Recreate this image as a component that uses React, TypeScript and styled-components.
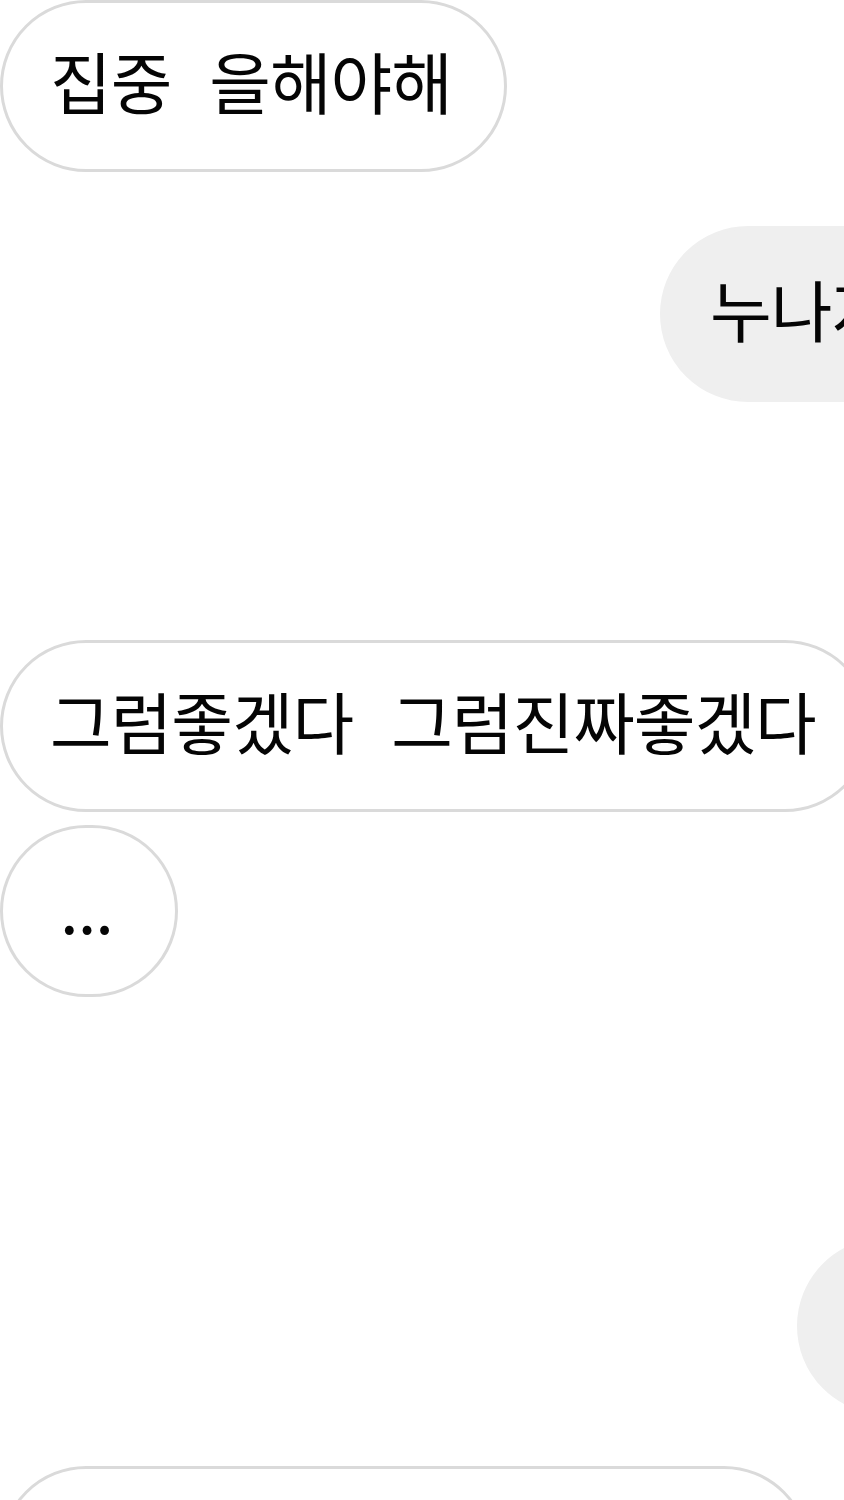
import styled, { createGlobalStyle } from 'styled-components'

const GlobalStyle = createGlobalStyle`
  html, body {
    margin: 0;
    padding: 0;
    background: #ffffff;
    overflow: hidden;
  }
  body {
    font-family: 'Noto Sans CJK KR', 'Noto Sans', sans-serif;
    color: #050505;
  }
`

type Side = 'left' | 'right'

interface Message {
  text: string
  side: Side
  gap: number
  indent?: number
}

const messages: Message[] = [
  { text: '집중\u00a0\u00a0을해야해', side: 'left', gap: 0 },
  { text: '누나지금뭐해', side: 'right', gap: 54, indent: 660 },
  { text: '그럼좋겠다\u00a0\u00a0그럼진짜좋겠다', side: 'left', gap: 238 },
  { text: '...', side: 'left', gap: 13 },
  { text: '응응', side: 'right', gap: 241, indent: 797 },
  { text: '나도\u00a0보고싶어\u00a0진짜그래요', side: 'left', gap: 52 },
]

const Thread = styled.div`
  display: flex;
  flex-direction: column;
  width: 844px;
  overflow: hidden;
`

const Row = styled.div<{ $gap: number; $indent: number }>`
  display: flex;
  justify-content: flex-start;
  margin-top: ${(p) => p.$gap}px;
  padding-left: ${(p) => p.$indent}px;
`

const Bubble = styled.div<{ $side: Side }>`
  box-sizing: border-box;
  flex-shrink: 0;
  display: flex;
  align-items: center;
  justify-content: center;
  min-width: 178px;
  height: ${(p) => (p.$side === 'right' ? 176 : 172)}px;
  padding: 0 52px 14px 47px;
  border-radius: 88px;
  border: 3px solid ${(p) => (p.$side === 'right' ? '#efefef' : '#dadada')};
  background: ${(p) => (p.$side === 'right' ? '#efefef' : '#ffffff')};
  font-size: 67px;
  line-height: 1;
  white-space: nowrap;
  letter-spacing: -1px;
  word-spacing: 5px;
`

const App: React.FC = () => {
  return (
    <>
      <GlobalStyle />
      <Thread>
        {messages.map((m, i) => (
          <Row key={i} $gap={m.gap} $indent={m.indent ?? 0}>
            <Bubble $side={m.side}>{m.text}</Bubble>
          </Row>
        ))}
      </Thread>
    </>
  )
}

export default App
